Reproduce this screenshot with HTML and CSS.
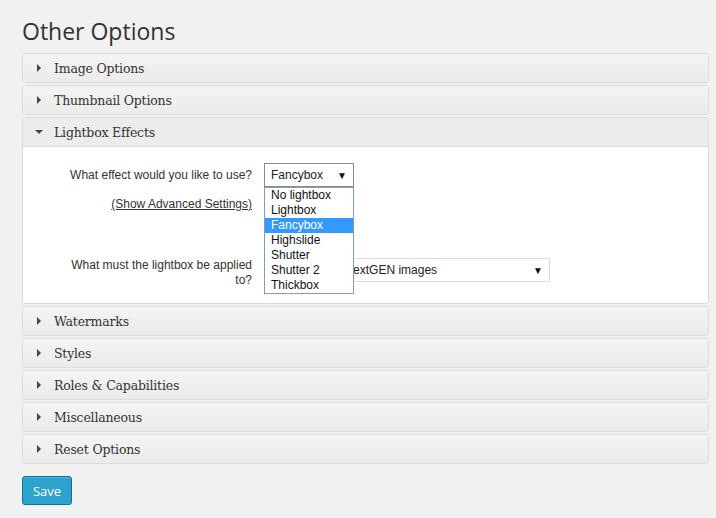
FILE: index.html
```html
<!DOCTYPE html>
<html>
<head>
<meta charset="utf-8">
<link rel="stylesheet" href="styles.css">
</head>
<body>
<div class="wrap">
  <h1 class="title">Other Options</h1>
  <div class="accordion">
    <div class="panel"><div class="head"><span class="arrow right"></span>Image Options</div></div>
    <div class="panel"><div class="head"><span class="arrow right"></span>Thumbnail Options</div></div>
    <div class="panel open">
      <div class="head"><span class="arrow down"></span>Lightbox Effects</div>
      <div class="body">
        <div class="form">
          <div class="label">What effect would you like to use?</div>
          <div class="field">
            <div class="select small"><span>Fancybox</span><span class="caret">▼</span></div>
            <ul class="dropdown">
              <li>No lightbox</li>
              <li>Lightbox</li>
              <li class="sel">Fancybox</li>
              <li>Highslide</li>
              <li>Shutter</li>
              <li>Shutter 2</li>
              <li>Thickbox</li>
            </ul>
          </div>
          <div class="label link"><a href="#">(Show Advanced Settings)</a></div>
          <div class="field"></div>
          <div class="label tall">What must the lightbox be applied to?</div>
          <div class="field tall">
            <div class="select wide"><span>Only apply to NextGEN images</span><span class="caret">▼</span></div>
          </div>
        </div>
      </div>
    </div>
    <div class="panel"><div class="head"><span class="arrow right"></span>Watermarks</div></div>
    <div class="panel"><div class="head"><span class="arrow right"></span>Styles</div></div>
    <div class="panel"><div class="head"><span class="arrow right"></span>Roles &amp; Capabilities</div></div>
    <div class="panel"><div class="head"><span class="arrow right"></span>Miscellaneous</div></div>
    <div class="panel"><div class="head"><span class="arrow right"></span>Reset Options</div></div>
  </div>
  <button class="save">Save</button>
</div>
</body>
</html>
```
FILE: styles.css
```css
html, body {
  margin: 0;
  padding: 0;
  background: #f1f1f1;
}
.wrap {
  padding: 16px 0 0 22px;
  width: 687px;
}
.title {
  margin: 0 0 7px 0;
  font-family: "Open Sans", sans-serif;
  font-weight: 400;
  font-size: 23px;
  line-height: 30px;
  color: #333;
}
.accordion {
  display: flex;
  flex-direction: column;
  gap: 2px;
}
.panel {
  border: 1px solid #dcdcdc;
  border-radius: 3px;
  background: #fff;
  overflow: visible;
}
.head {
  height: 28px;
  display: flex;
  align-items: center;
  background: linear-gradient(#f4f4f4, #ebebeb);
  border-radius: 3px;
  font-family: "DejaVu Serif", serif;
  font-size: 12.5px;
  color: #333;
  letter-spacing: -0.2px;
}
.open .head {
  background: #ececec;
  border-bottom: 1px solid #dcdcdc;
  border-radius: 3px 3px 0 0;
}
.arrow {
  width: 0;
  height: 0;
}
.arrow.right {
  border-top: 4px solid transparent;
  border-bottom: 4px solid transparent;
  border-left: 4px solid #444;
  margin-left: 14px;
  margin-right: 13px;
}
.arrow.down {
  border-left: 4px solid transparent;
  border-right: 4px solid transparent;
  border-top: 4px solid #444;
  margin-left: 12px;
  margin-right: 11px;
}
.body {
  padding: 16px 0 15px 0;
}
.form {
  display: grid;
  grid-template-columns: 229px 1fr;
  column-gap: 12px;
  font-family: "Liberation Sans", Arial, sans-serif;
  font-size: 12px;
  color: #333;
}
.label {
  text-align: right;
  line-height: 15px;
  padding-top: 5px;
}
.label.link {
  padding-top: 10px;
  height: 61px;
}
.label.link a {
  color: #333;
  text-decoration: underline;
}
.label.tall {
  padding-top: 0;
  padding-left: 40px;
  line-height: 15px;
}
.field {
  position: relative;
}
.select {
  box-sizing: border-box;
  height: 24px;
  border: 1px solid #aaa;
  background: #fff;
  display: flex;
  align-items: center;
  justify-content: space-between;
  padding: 0 6px 0 6px;
  color: #222;
}
.select.small {
  width: 90px;
  border-color: #8a8a8a;
}
.select.wide {
  width: 286px;
  border-color: #ddd;
}
.caret {
  font-size: 10px;
  color: #111;
}
.dropdown {
  position: absolute;
  left: 0;
  top: 24px;
  z-index: 2;
  box-sizing: border-box;
  width: 90px;
  margin: 0;
  padding: 0;
  list-style: none;
  background: #fff;
  border: 1px solid #7f9db9;
  line-height: 15px;
  color: #111;
}
.dropdown li {
  padding: 0 6px;
}
.dropdown li.sel {
  background: #3399ff;
  color: #fff;
}
.save {
  margin-top: 12px;
  width: 50px;
  height: 29px;
  background: #2ea2cc;
  border: 1px solid #0074a2;
  border-radius: 3px;
  color: #fff;
  font-family: "Open Sans", sans-serif;
  font-size: 13px;
  padding: 0;
  box-shadow: inset 0 1px 0 rgba(120,200,230,0.5);
}
```
